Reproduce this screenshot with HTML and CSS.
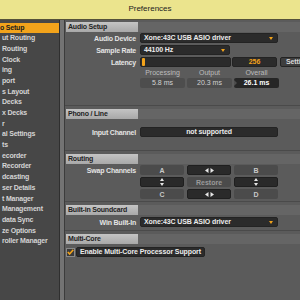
FILE: index.html
```html
<!DOCTYPE html>
<html lang="en">
<head>
    <meta charset="UTF-8">
    <title>Preferences</title>
    <link rel="stylesheet" href="styles.css">
</head>
<body>
    <div class="titlebar">Preferences</div>
    <div class="main">
        <ul class="nav">
            <li class="active">o Setup</li>
            <li>ut Routing</li>
            <li>Routing</li>
            <li>Clock</li>
            <li>ing</li>
            <li>port</li>
            <li>s Layout</li>
            <li>Decks</li>
            <li>x Decks</li>
            <li>r</li>
            <li>al Settings</li>
            <li>ts</li>
            <li>ecorder</li>
            <li>Recorder</li>
            <li>dcasting</li>
            <li>ser Details</li>
            <li>t Manager</li>
            <li>Management</li>
            <li>data Sync</li>
            <li>ze Options</li>
            <li>roller Manager</li>
        </ul>
        <div class="split"></div>
        <div class="content">
            <section class="sect sect-audio">
                <div class="head"><span class="tab">Audio Setup</span></div>
                <div class="row first">
                    <span class="lbl">Audio Device</span>
                    <div class="box select">Xone:43C USB ASIO driver<i class="arrow"></i></div>
                </div>
                <div class="row">
                    <span class="lbl">Sample Rate</span>
                    <div class="box select short">44100 Hz<i class="arrow"></i></div>
                </div>
                <div class="row">
                    <span class="lbl">Latency</span>
                    <div class="box slider"><i class="knob"></i></div>
                    <div class="box lat-val">256</div>
                    <div class="box settings">Settings</div>
                </div>
                <div class="metrics names">
                    <span>Processing</span>
                    <span>Output</span>
                    <span>Overall</span>
                </div>
                <div class="metrics values">
                    <span class="val">5.8 ms</span>
                    <span class="val">20.3 ms</span>
                    <span class="val total">26.1 ms</span>
                </div>
            </section>

            <section class="sect sect-phono">
                <div class="head"><span class="tab">Phono / Line</span></div>
                <div class="row input-row">
                    <span class="lbl">Input Channel</span>
                    <div class="box plain">not supported</div>
                </div>
            </section>

            <section class="sect sect-routing">
                <div class="head"><span class="tab">Routing</span></div>
                <div class="row first swap-row">
                    <span class="lbl">Swap Channels</span>
                </div>
                <div class="swap">
                    <span class="sw">A</span>
                    <span class="sw dark"><svg width="9" height="5" viewBox="0 0 9 5"><path d="M3.5 0 L0 2.5 L3.5 5 Z M5.5 0 L9 2.5 L5.5 5 Z" fill="#e6e6e6"/></svg></span>
                    <span class="sw">B</span>
                    <span class="sw dark"><svg width="4" height="8" viewBox="0 0 4 8"><path d="M2 0 L4 3 L0 3 Z M0 5 L4 5 L2 8 Z" fill="#e6e6e6"/></svg></span>
                    <span class="sw restore">Restore</span>
                    <span class="sw dark"><svg width="4" height="8" viewBox="0 0 4 8"><path d="M2 0 L4 3 L0 3 Z M0 5 L4 5 L2 8 Z" fill="#e6e6e6"/></svg></span>
                    <span class="sw">C</span>
                    <span class="sw dark"><svg width="9" height="5" viewBox="0 0 9 5"><path d="M3.5 0 L0 2.5 L3.5 5 Z M5.5 0 L9 2.5 L5.5 5 Z" fill="#e6e6e6"/></svg></span>
                    <span class="sw">D</span>
                </div>
            </section>

            <section class="sect sect-builtin">
                <div class="head"><span class="tab">Built-in Soundcard</span></div>
                <div class="row">
                    <span class="lbl">Win Built-In</span>
                    <div class="box select">Xone:43C USB ASIO driver<i class="arrow"></i></div>
                </div>
            </section>

            <section class="sect sect-multi">
                <div class="head"><span class="tab">Multi-Core</span></div>
                <div class="row check-row">
                    <span class="check"><svg width="7" height="6" viewBox="0 0 7 6"><path d="M0.8 3 L2.6 5 L6.3 0.8" fill="none" stroke="#f2a31b" stroke-width="1.6"/></svg></span>
                    <div class="box plain check-btn">Enable Multi-Core Processor Support</div>
                </div>
            </section>
        </div>
    </div>
</body>
</html>
```

FILE: styles.css
```css
body {
    margin: 0;
    width: 300px;
    height: 300px;
    overflow: hidden;
    background-color: #5b5b5b;
    font-family: "Liberation Sans", Arial, sans-serif;
    font-size: 7px;
}
.titlebar {
    height: 19px;
    border-bottom: 1px solid #55523a;
    background-color: #ebe48d;
    color: #222;
    font-size: 8px;
    line-height: 17px;
    text-align: center;
}
.main {
    display: flex;
    height: 280px;
}
.nav {
    width: 59px;
    flex-shrink: 0;
    margin: 0;
    padding: 2.5px 0 0 0;
    list-style: none;
    background-color: #474747;
    overflow: hidden;
}
.nav li {
    height: 10.7px;
    line-height: 10.7px;
    padding-left: 2px;
    color: #d4d4d4;
    font-weight: bold;
    letter-spacing: -0.2px;
    white-space: nowrap;
}
.nav li.active {
    padding-left: 0;
    background-color: #f2a31b;
    color: #1c1c1c;
}
.split {
    width: 4px;
    flex-shrink: 0;
    border-left: 1px solid #2f2f2f;
    border-right: 1px solid #3c3c3c;
    background-color: #737373;
}
.content {
    flex: 1;
    overflow: hidden;
    background-color: #5b5b5b;
}
.sect {
    border-top: 1px solid #4a4a4a;
    padding-top: 3px;
}
.sect-audio {
    border-top: none;
    padding-top: 2px;
    padding-bottom: 17px;
}
.sect-phono {
    padding-bottom: 13px;
}
.sect-routing {
    padding-bottom: 2px;
}
.sect-builtin {
    padding-bottom: 3px;
}
.head {
    height: 10px;
    margin-left: 1px;
    background-color: #656565;
}
.tab {
    display: block;
    width: 70px;
    height: 10px;
    padding-left: 2px;
    background: linear-gradient(#c4c4c4, #a8a8a8);
    color: #1e1e1e;
    font-weight: bold;
    line-height: 10px;
    letter-spacing: -0.2px;
    white-space: nowrap;
}
.row {
    display: flex;
    align-items: center;
    height: 10px;
    margin-top: 2px;
}
.row.first {
    margin-top: 1px;
}
.row.input-row {
    margin-top: 8px;
}
.row > * {
    flex-shrink: 0;
}
.lbl {
    width: 71px;
    padding-right: 4px;
    text-align: right;
    color: #e4e4e4;
    font-weight: bold;
    letter-spacing: -0.2px;
    white-space: nowrap;
}
.box {
    position: relative;
    height: 10px;
    box-sizing: border-box;
    border: 1px solid #232323;
    border-radius: 2px;
    background-color: #2b2b2b;
    color: #ececec;
    font-weight: bold;
    line-height: 8px;
    letter-spacing: -0.1px;
    white-space: nowrap;
}
.select {
    width: 138px;
    padding-left: 3px;
}
.select.short {
    width: 90px;
}
.arrow {
    position: absolute;
    right: 4px;
    top: 3px;
    border-left: 2.5px solid transparent;
    border-right: 2.5px solid transparent;
    border-top: 3px solid #f2a31b;
}
.slider {
    width: 91px;
}
.knob {
    position: absolute;
    left: 1px;
    top: 0;
    width: 3px;
    height: 8px;
    background-color: #f2a31b;
    border-radius: 1px;
}
.lat-val {
    width: 45px;
    margin-left: 1px;
    text-align: center;
    color: #f2a31b;
}
.settings {
    width: 34px;
    margin-left: 3px;
    padding-left: 5px;
    background-color: #3e3e3e;
    color: #d8d8d8;
}
.metrics {
    display: grid;
    grid-template-columns: 45px 45px 45px;
    column-gap: 2px;
    margin-left: 75px;
}
.names {
    height: 9px;
    margin-top: 1px;
    color: #bdbdbd;
    line-height: 9px;
    text-align: center;
}
.values {
    height: 10px;
    margin-top: 1px;
    line-height: 10px;
    text-align: center;
}
.val {
    position: relative;
    border-radius: 2px;
    background-color: #4d4d4d;
    color: #d2d2d2;
}
.val.total {
    background-color: #262626;
    color: #fff;
    font-weight: bold;
}
.val.total::before {
    content: "";
    position: absolute;
    left: 0;
    top: 2px;
    border-top: 3px solid transparent;
    border-bottom: 3px solid transparent;
    border-left: 3px solid #4d4d4d;
}
.plain {
    width: 138px;
    text-align: center;
}
.swap-row {
    height: 10px;
}
.swap {
    display: grid;
    grid-template-columns: 44px 44px 44px;
    grid-auto-rows: 10px;
    column-gap: 3px;
    row-gap: 2px;
    margin-top: -10px;
    margin-left: 75px;
}
.sw {
    display: flex;
    align-items: center;
    justify-content: center;
    border-radius: 2px;
    background-color: #4b4b4b;
    color: #c8c8c8;
    font-weight: bold;
}
.sw.dark {
    box-sizing: border-box;
    border: 1px solid #1f1f1f;
    background-color: #2a2a2a;
}
.sw.restore {
    color: #9a9a9a;
}
.check-row {
    margin-top: 3px;
}
.check {
    display: flex;
    align-items: center;
    justify-content: center;
    width: 7px;
    height: 7px;
    margin-left: 1px;
    border: 1px solid #8a8a8a;
    background-color: #3a3a3a;
}
.check-btn {
    width: 129px;
    margin-left: 1px;
}
```
